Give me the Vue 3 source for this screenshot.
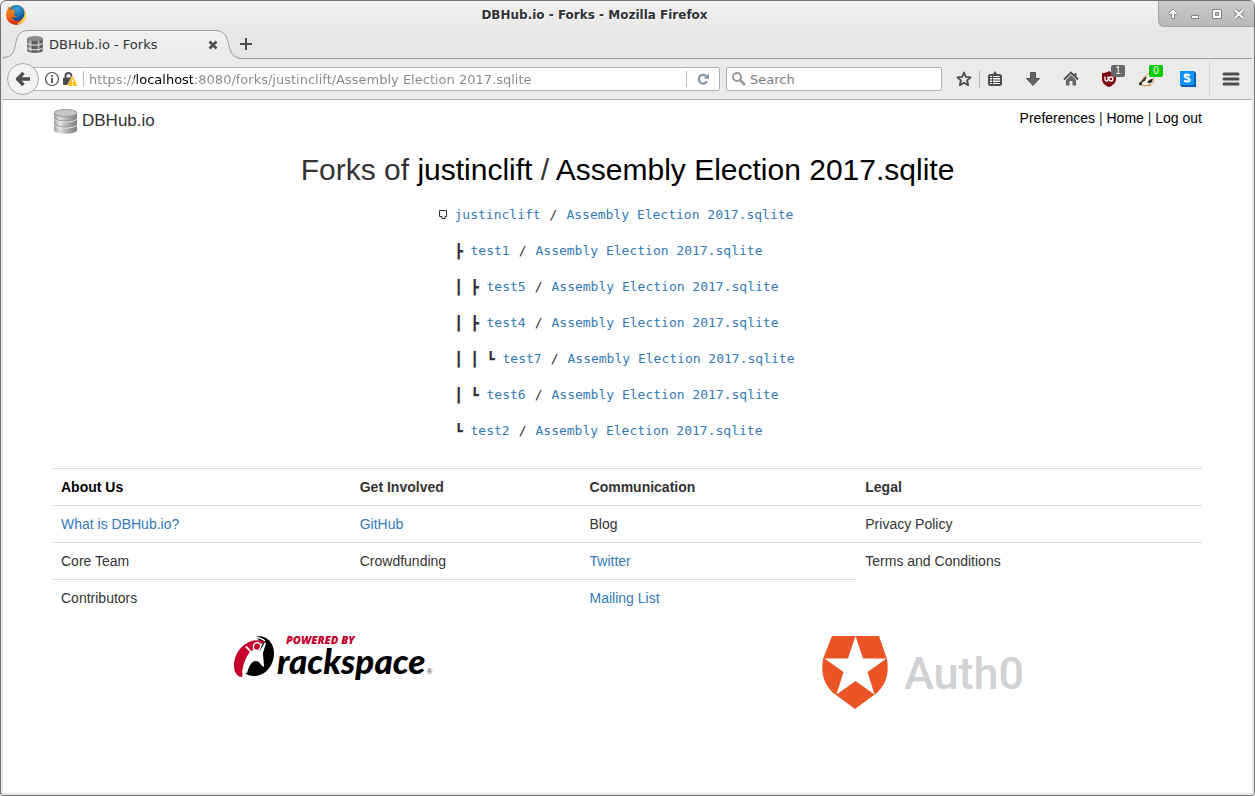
<script setup>
import { ref } from 'vue'

const url = ref('https://localhost:8080/forks/justinclift/Assembly Election 2017.sqlite')
const query = ref('')
const database = 'Assembly Election 2017.sqlite'

const forks = [
  { user: 'justinclift', branch: [] },
  { user: 'test1', branch: ['', '┣'] },
  { user: 'test5', branch: ['', '┃', '┣'] },
  { user: 'test4', branch: ['', '┃', '┣'] },
  { user: 'test7', branch: ['', '┃', '┃', '┗'] },
  { user: 'test6', branch: ['', '┃', '┗'] },
  { user: 'test2', branch: ['', '┗'] }
]
</script>

<template>
  <div class="window">
    <header class="titlebar">
      <svg class="firefox" width="22" height="22" viewBox="0 0 22 22" aria-hidden="true">
        <defs>
          <linearGradient id="fox" x1="0" y1="0" x2="0" y2="1">
            <stop offset="0" stop-color="#f6a21c" />
            <stop offset="0.55" stop-color="#ee6a17" />
            <stop offset="1" stop-color="#c8260f" />
          </linearGradient>
          <radialGradient id="globe" cx="0.5" cy="0.25" r="0.8">
            <stop offset="0" stop-color="#39a5dd" />
            <stop offset="1" stop-color="#0b3f86" />
          </radialGradient>
        </defs>
        <circle cx="11" cy="11" r="10" fill="url(#fox)" />
        <path d="M19 5a10 10 0 0 1 1.500 9c-1 4-4.500 6-8.500 6 4-2 6-5 6-9z" fill="#fbd64a" />
        <path d="M5 4.500C7 1.800 10 .8 13 1.200c4 .6 6.500 4 6.500 8 0 4.500-3 7.500-7 7.500-3.500 0-5-2-5-4 1.500.8 3 .6 4.500-.4-1.500-.3-3-.7-3.500-2 .4-1.200 2-1.500 2-2.500C9 7.500 8.500 6 9 5c-1.500.2-2.500.7-3 1.500z" fill="url(#globe)" />
        <path d="M1.500 9C2 6.500 3 4.500 3.500 2.500c1 .7 1.500 1.500 2 2.500C4 7 3.500 9 4 11z" fill="#e9781a" />
      </svg>
      <div class="window-title">DBHub.io - Forks - Mozilla Firefox</div>
      <div class="controls">
        <button type="button" aria-label="Shade">
          <svg width="14" height="14" viewBox="0 0 14 14"><path d="M7 2l4.500 4.500-1.500 1.500-1.500-1V11.500h-3V7L4 8 2.500 6.500z" fill="#fff" stroke="#858585" /></svg>
        </button>
        <button type="button" aria-label="Minimize">
          <svg width="14" height="14" viewBox="0 0 14 14"><path d="M3.500 8.500h7v3h-7z" fill="#fff" stroke="#858585" /></svg>
        </button>
        <button type="button" aria-label="Maximize">
          <svg width="14" height="14" viewBox="0 0 14 14"><path d="M2.500 2.500h9v9h-9zM5.500 5.500v3h3v-3z" fill="#fff" fill-rule="evenodd" stroke="#858585" /></svg>
        </button>
        <button type="button" aria-label="Close window">
          <svg width="14" height="14" viewBox="0 0 14 14"><path d="M3 3l8 8M11 3l-8 8" stroke="#858585" stroke-width="4" /><path d="M3 3l8 8M11 3l-8 8" stroke="#fff" stroke-width="2" /></svg>
        </button>
      </div>
    </header>

    <nav class="tabs" aria-label="Tabs">
      <div class="tab">
        <svg class="tab-shape" width="236" height="30" viewBox="0 0 236 30" aria-hidden="true">
          <defs>
            <linearGradient id="tabfill" x1="0" y1="0" x2="0" y2="1">
              <stop offset="0" stop-color="#f1f1f0" />
              <stop offset="1" stop-color="#ebebe9" />
            </linearGradient>
          </defs>
          <path d="M0 29.500C7 29 10 27 12 19C14 9 15 1.500 26 1.500H212C222 1.500 224 8 226 17C228 26 230 29 236 29.500V30H0z" fill="url(#tabfill)" />
          <path d="M0 28.500C7 28 10 26 12 18C14 8 15 1.500 26 1.500H212C222 1.500 224 8 226 17C228 25 230 28 236 28.500" fill="none" stroke="#9a9fa5" />
        </svg>
        <svg class="favicon" width="16" height="17" viewBox="0 0 24 26" aria-hidden="true">
          <path d="M0 4v18c0 5 24 5 24 0V4z" fill="#5e5e5e" />
          <path d="M2 5v17l5 2V7zM16 8v16l3-1V7z" fill="#a9a9a9" />
          <ellipse cx="12" cy="4" rx="12" ry="4" fill="#8d8d8d" />
          <path d="M0 11c3 4 21 4 24 0M0 18c3 4 21 4 24 0" fill="none" stroke="#eee" stroke-width="1.500" />
        </svg>
        <span class="tab-title">DBHub.io - Forks</span>
        <button type="button" class="tab-close" aria-label="Close tab">
          <svg width="10" height="10" viewBox="0 0 10 10"><path d="M1.500 1.500l7 7M8.500 1.500l-7 7" stroke="#4c5052" stroke-width="2.600" /></svg>
        </button>
      </div>
      <button type="button" class="new-tab" aria-label="New tab">
        <svg width="12" height="12" viewBox="0 0 12 12"><path d="M6 0v12M0 6h12" stroke="#4c4c4c" stroke-width="2" /></svg>
      </button>
    </nav>

    <div class="toolbar">
      <button type="button" class="back" aria-label="Back">
        <svg width="16" height="16" viewBox="0 0 16 16"><path d="M15 8H3M8.500 2L2.500 8l6 6" fill="none" stroke="#4d4d4d" stroke-width="3.400" stroke-linejoin="round" /></svg>
      </button>
      <div class="urlbar">
        <svg class="identity" width="34" height="16" viewBox="0 0 34 16" aria-hidden="true">
          <circle cx="7" cy="8" r="6.500" fill="none" stroke="#4d4d4d" stroke-width="1.200" />
          <path d="M7 4v1.800M7 7v5" stroke="#4d4d4d" stroke-width="1.800" />
          <path d="M20.500 7V5a3 3 0 0 1 6 0v2" fill="none" stroke="#4d4d4d" stroke-width="2" />
          <rect x="18" y="6.500" width="9" height="7.500" rx="1" fill="#4d4d4d" />
          <path d="M27.500 4.500l5.500 10.500H22z" fill="#fdb813" stroke="#fff" stroke-width="0.500" />
          <path d="M27.500 8.500v3M27.500 12.500V14" stroke="#fff" stroke-width="1.300" />
        </svg>
        <i class="divider"></i>
        <input v-model="url" class="address" type="text" aria-label="Address" />
        <i class="divider"></i>
        <button type="button" class="reload" aria-label="Reload">
          <svg width="12" height="12" viewBox="0 0 12 12"><path d="M9.200 3.200A4.300 4.300 0 1 0 10 8.200" fill="none" stroke="#8494a7" stroke-width="2.200" /><path d="M12 .5v5.300H6.500z" fill="#8494a7" /></svg>
        </button>
      </div>
      <div class="search">
        <svg width="14" height="14" viewBox="0 0 14 14" aria-hidden="true"><circle cx="5" cy="5" r="4" fill="none" stroke="#9a9a9a" stroke-width="2" /><path d="M8 8l5 5" stroke="#9a9a9a" stroke-width="2.600" /></svg>
        <input v-model="query" type="text" aria-label="Search" placeholder="Search" />
      </div>
      <button type="button" class="star" aria-label="Bookmark">
        <svg width="16" height="16" viewBox="0 0 16 16"><path d="M8 1.600l1.900 4.300 4.700.5-3.500 3.100 1 4.600L8 11.700l-4.100 2.400 1-4.600L1.400 6.400l4.700-.5z" fill="none" stroke="#4d4d4d" stroke-width="1.900" stroke-linejoin="round" /></svg>
      </button>
      <i class="divider"></i>
      <button type="button" class="library" aria-label="Bookmarks list">
        <svg width="14" height="16" viewBox="0 0 14 16"><rect x="1" y="4" width="12" height="10" rx="1.500" fill="#fff" stroke="#4d4d4d" stroke-width="2" /><path d="M2 4l3-1 2-3 2 3 3 1z" fill="#4d4d4d" /><path d="M1 6.500h12M1 9h12M1 11.500h12M4.500 4v10" stroke="#4d4d4d" /></svg>
      </button>
      <button type="button" class="tool" aria-label="Downloads">
        <svg width="16" height="16" viewBox="0 0 16 16"><path d="M5.500 1.500h5v6h4L8 14.500 1.500 7.500h4z" fill="#646464" stroke="#4d4d4d" /></svg>
      </button>
      <button type="button" class="tool" aria-label="Home">
        <svg width="16" height="16" viewBox="0 0 16 16"><path d="M1 8.500l7-7 7 7M12.500 2v4" fill="none" stroke="#4d4d4d" stroke-width="1.800" /><path d="M3 9l5-5 5 5v5.500H9.500V10h-3v4.500H3z" fill="#666" /></svg>
      </button>
      <button type="button" class="tool" aria-label="uBlock Origin">
        <svg width="16" height="16" viewBox="0 0 16 16"><path d="M8 0c2 1.600 4.500 2 7 2v6c0 4-3 6.500-7 8-4-1.500-7-4-7-8V2c2.500 0 5-.4 7-2z" fill="#800610" /><path d="M4 5.500v3a1.500 1.500 0 0 0 3 0v-3" fill="none" stroke="#fff" stroke-width="1.300" /><circle cx="10" cy="8" r="2" fill="none" stroke="#fff" stroke-width="1.300" /></svg>
        <span class="badge">1</span>
      </button>
      <button type="button" class="tool" aria-label="Privacy Badger">
        <svg width="16" height="16" viewBox="0 0 16 16">
          <path d="M0 12.500L5 6l5-4 5 5-1 5-4 2-5 1z" fill="#fbf8f2" stroke="#c98a50" stroke-width="0.800" />
          <path d="M1.500 11.500L6 6l2-.5-2 4-3.500 2.500z" fill="#2b2724" />
          <path d="M8 11l3-2.500 3-1-1 3.500-2.500 1.500z" fill="#2b2724" />
          <path d="M4 14.500h8" stroke="#d88943" />
          <circle cx="1.500" cy="12.800" r="1.500" fill="#1e1e1e" />
        </svg>
        <span class="badge green">0</span>
      </button>
      <button type="button" class="stylish" aria-label="Stylish">
        <svg width="16" height="16" viewBox="0 0 16 16"><path d="M0 0h14l2 2v14H2l-2-2z" fill="#0758a8" /><rect width="14" height="14" fill="#0b94fb" /><path d="M10 4.500C7 3 4.500 3.500 4.700 5.200 5 7.300 9.500 6.400 9.500 9c0 1.800-3 2-5.500.6" fill="none" stroke="#fff" stroke-width="2.200" /></svg>
      </button>
      <i class="divider tall"></i>
      <button type="button" class="menu" aria-label="Menu">
        <svg width="16" height="14" viewBox="0 0 16 14"><path d="M1 2h14M1 7h14M1 12h14" stroke="#4d4d4d" stroke-width="3" stroke-linecap="round" /></svg>
      </button>
    </div>

    <main class="page">
      <div class="page-head">
        <a class="brand" href="#">
          <svg width="25" height="25" viewBox="0 0 25 25" aria-hidden="true">
            <defs>
              <linearGradient id="metal" x1="0" y1="0" x2="1" y2="0">
                <stop offset="0" stop-color="#9c9c9c" />
                <stop offset="0.25" stop-color="#e2e2e2" />
                <stop offset="0.5" stop-color="#bcbcbc" />
                <stop offset="1" stop-color="#7c7c7c" />
              </linearGradient>
            </defs>
            <path d="M1 4v17c0 5 23 5 23 0V4z" fill="url(#metal)" />
            <ellipse cx="12.500" cy="4" rx="11.500" ry="3.500" fill="#c6c6c6" stroke="#9a9a9a" />
            <path d="M1 10c3 4 20 4 23 0M1 16c3 4 20 4 23 0" fill="none" stroke="#f2f2f2" />
            <path d="M1 9c3 4 20 4 23 0M1 15c3 4 20 4 23 0" fill="none" stroke="#8c8c8c" stroke-width="0.800" />
          </svg>
          <span>DBHub.io</span>
        </a>
        <nav class="account" aria-label="Account">
          <a href="#">Preferences</a> | <a href="#">Home</a> | <a href="#">Log out</a>
        </nav>
      </div>

      <h2>Forks of <a href="#">justinclift</a> / <a href="#">{{ database }}</a></h2>

      <ul class="tree">
        <li v-for="fork in forks" :key="fork.user">
          <svg v-if="!fork.branch.length" class="root" width="8" height="10" viewBox="0 0 8 10" aria-hidden="true"><path d="M.5 .5h7v6H6v2H3V6.500H.5z" fill="none" stroke="#333" /></svg>
          <span v-for="(mark, i) in fork.branch" :key="i" class="mark">{{ mark }}</span>
          <span class="fork"><a href="#">{{ fork.user }}</a><span>/</span><a href="#">{{ database }}</a></span>
        </li>
      </ul>

      <table>
        <colgroup><col class="c1" /><col class="c2" /><col class="c3" /><col class="c4" /></colgroup>
        <thead>
          <tr><th class="dark">About Us</th><th>Get Involved</th><th>Communication</th><th>Legal</th></tr>
        </thead>
        <tbody>
          <tr><td><a href="#">What is DBHub.io?</a></td><td><a href="#">GitHub</a></td><td>Blog</td><td>Privacy Policy</td></tr>
          <tr><td>Core Team</td><td>Crowdfunding</td><td><a href="#">Twitter</a></td><td rowspan="2">Terms and Conditions</td></tr>
          <tr><td>Contributors</td><td></td><td><a href="#">Mailing List</a></td></tr>
        </tbody>
      </table>

      <div class="sponsors">
        <a href="#" aria-label="Powered by Rackspace">
          <svg width="200" height="54" viewBox="0 -4 200 54">
            <path d="M22 2C32-1 41 7 41 18c0 13-9 23-20 23-4 0-7-1-9-3L30 8z" fill="#000" />
            <path d="M31 6C16 2 1 14 1 31c0 6 3 11 8 11 1-9 4-17 8-25L31 7z" fill="#c4002b" />
            <path d="M22 2.500c4 0 7 1 10 3.500" fill="none" stroke="#fff" stroke-width="1.500" />
            <path d="M14 11l4 5c3 1 8 1 10-2l4-7 1 1-3 10c0 5 1 9 1 14-3-1-4-6-8-6-5 0-7 6-9 12H9c1-8 3-15 8-21l-5-5z" fill="#fff" />
            <ellipse cx="24" cy="11.500" rx="3.500" ry="4" transform="rotate(25 24 11.500)" fill="#c4002b" stroke="#fff" stroke-width="1.500" />
            <text x="53" y="9" class="powered">POWERED BY</text>
            <text x="44" y="39" class="rackspace">rackspace</text>
            <text x="194" y="39" class="registered">®</text>
          </svg>
        </a>
        <a href="#" aria-label="Auth0">
          <svg width="200" height="78" viewBox="0 -4 200 78">
            <path d="M10 1H57L65 24C68 41 62 53 52 60L33 74 14 60C4 53-2 41 1 24z" fill="#eb5424" />
            <path d="M33.500 1L41 23.500H64.500L45.500 37 52.500 59.500 33.500 46 14.500 59.500 21.500 37 2.500 23.500H26z" fill="#fff" />
            <text x="82" y="54" class="auth">Auth0</text>
          </svg>
        </a>
      </div>
    </main>
  </div>
</template>

<style>
html, body { margin: 0; background: #fff; }
</style>

<style scoped>
* { box-sizing: border-box; }
.window {
  display: flex;
  flex-direction: column;
  min-height: 100vh;
  border: 1px solid #737173;
  border-radius: 6px 6px 3px 3px;
  overflow: hidden;
  background: linear-gradient(#f3f2f2, #e7e7e5 30px);
  font-family: "DejaVu Sans", sans-serif;
  font-size: 13px;
  color: #2e3436;
}
button { display: flex; align-items: center; justify-content: center; flex: none; margin: 0; padding: 0; border: 0; background: none; }
svg { display: block; flex: none; overflow: visible; }
input { min-width: 0; border: 0; outline: 0; padding: 0; font: inherit; }
a { color: #337ab7; text-decoration: none; }

.titlebar { display: flex; height: 27px; align-items: flex-start; }
.firefox { margin: 3px 4px 0 4px; }
.window-title { flex: 1; text-align: center; font-size: 12px; font-weight: bold; line-height: 28px; text-shadow: 1px 1px #fff; }
.controls {
  display: flex; width: 96px; height: 26px; padding: 0 5px 0 3px;
  background: linear-gradient(#cbcbcb, #b8b8b8);
  border: solid #a2a2a2; border-width: 0 0 1px 1px; border-radius: 0 0 0 6px;
}
.controls button { width: 22px; }

.tabs { display: flex; height: 31px; margin: 0 2px; border-bottom: 1px solid #9b9b9b; }
.tab { position: relative; display: flex; align-items: center; width: 236px; height: 31px; padding: 2px 21px 0 24px; }
.tab-shape { position: absolute; left: 0; bottom: 0; }
.favicon, .tab-title, .tab-close { position: relative; }
.tab-title { flex: 1; margin-left: 6px; }
.new-tab { width: 14px; padding-top: 2px; }

.toolbar {
  display: flex; align-items: center; height: 41px; margin: 0 2px;
  background: #ebebe9; border-bottom: 1px solid #b0b0ae;
}
.back { position: relative; width: 32px; height: 32px; margin: 0 0 0 4px; border: 1px solid #a9a9a9; border-radius: 50%; background: #f3f3f2; }
.urlbar, .search { display: flex; align-items: center; height: 24px; background: #fff; border: 1px solid #b2b2b0; border-radius: 2px; }
.urlbar { flex: 1; margin: 0 6px 0 -6px; padding-left: 11px; }
.divider { flex: none; width: 1px; height: 18px; background: #bcbcbc; }
.urlbar .divider { height: 16px; margin-left: 4px; }
.address {
  flex: 1; margin-left: 5px; height: 20px; color: transparent; caret-color: #222;
  background: linear-gradient(to right, #888 45px, #000 45px, #000 104px, #888 104px);
  -webkit-background-clip: text; background-clip: text;
}
.reload { width: 32px; }
.search { width: 216px; padding: 0 5px; }
.search input { flex: 1; margin-left: 4px; background: none; }
.search input::placeholder { color: #808080; opacity: 1; }
.star { width: 28px; margin: 0 1px 0 8px; }
.library { width: 30px; margin-right: 4px; }
.tool { position: relative; width: 38px; height: 30px; }
.badge {
  position: absolute; top: 1px; left: 21px; width: 14px; height: 12px; border-radius: 2px;
  background: #666; color: #fff; font-size: 10px; line-height: 12px; text-align: center;
}
.badge.green { background: #0c0; }
.stylish { width: 43px; }
.divider.tall { height: 34px; background: #d4d4d2; }
.menu { width: 42px; }

.page {
  flex: 1; margin: 0 2px 2px; padding: 8px 50px 40px; background: #fff;
  font-family: "Liberation Sans", Arial, sans-serif; font-size: 14px; line-height: 20px; color: #333;
}
.page-head { display: flex; justify-content: space-between; }
.brand { display: flex; align-items: center; gap: 4px; color: #333; font-size: 17px; height: 26px; }
.account a, h2 a { color: #000; }
h2 { margin: 19px 0 20px; font-size: 30px; line-height: 33px; font-weight: 500; text-align: center; }
.tree {
  width: max-content; margin: 0 auto; padding: 0 22px 0 0; list-style: none;
  font-family: "DejaVu Sans Mono", monospace; font-size: 13px; line-height: 18px;
}
.tree li { display: flex; height: 36px; }
.root { margin: 4px 8px 0 0; }
.mark { width: 16px; font-size: 14px; }
.fork { display: flex; gap: 9px; }
table { width: 100%; margin-top: 10px; border-collapse: collapse; table-layout: fixed; }
.c1 { width: 26%; }
.c2 { width: 20%; }
.c3 { width: 24%; }
.c4 { width: 30%; }
th, td { padding: 8px; border-top: 1px solid #ddd; text-align: left; vertical-align: top; height: 37px; }
.dark { color: #000; }
.sponsors { display: grid; grid-template-columns: 1fr 1fr; justify-items: center; align-items: start; margin: 14px -15px 0; }
.powered { font: italic 800 11px "Open Sans", sans-serif; fill: #c4002b; }
.rackspace { font: italic 900 35px Lato, sans-serif; fill: #000; }
.registered { font: 7px "Liberation Sans", sans-serif; fill: #333; }
.auth { font: 500 45px Roboto, sans-serif; fill: #d0d2d3; }
</style>
